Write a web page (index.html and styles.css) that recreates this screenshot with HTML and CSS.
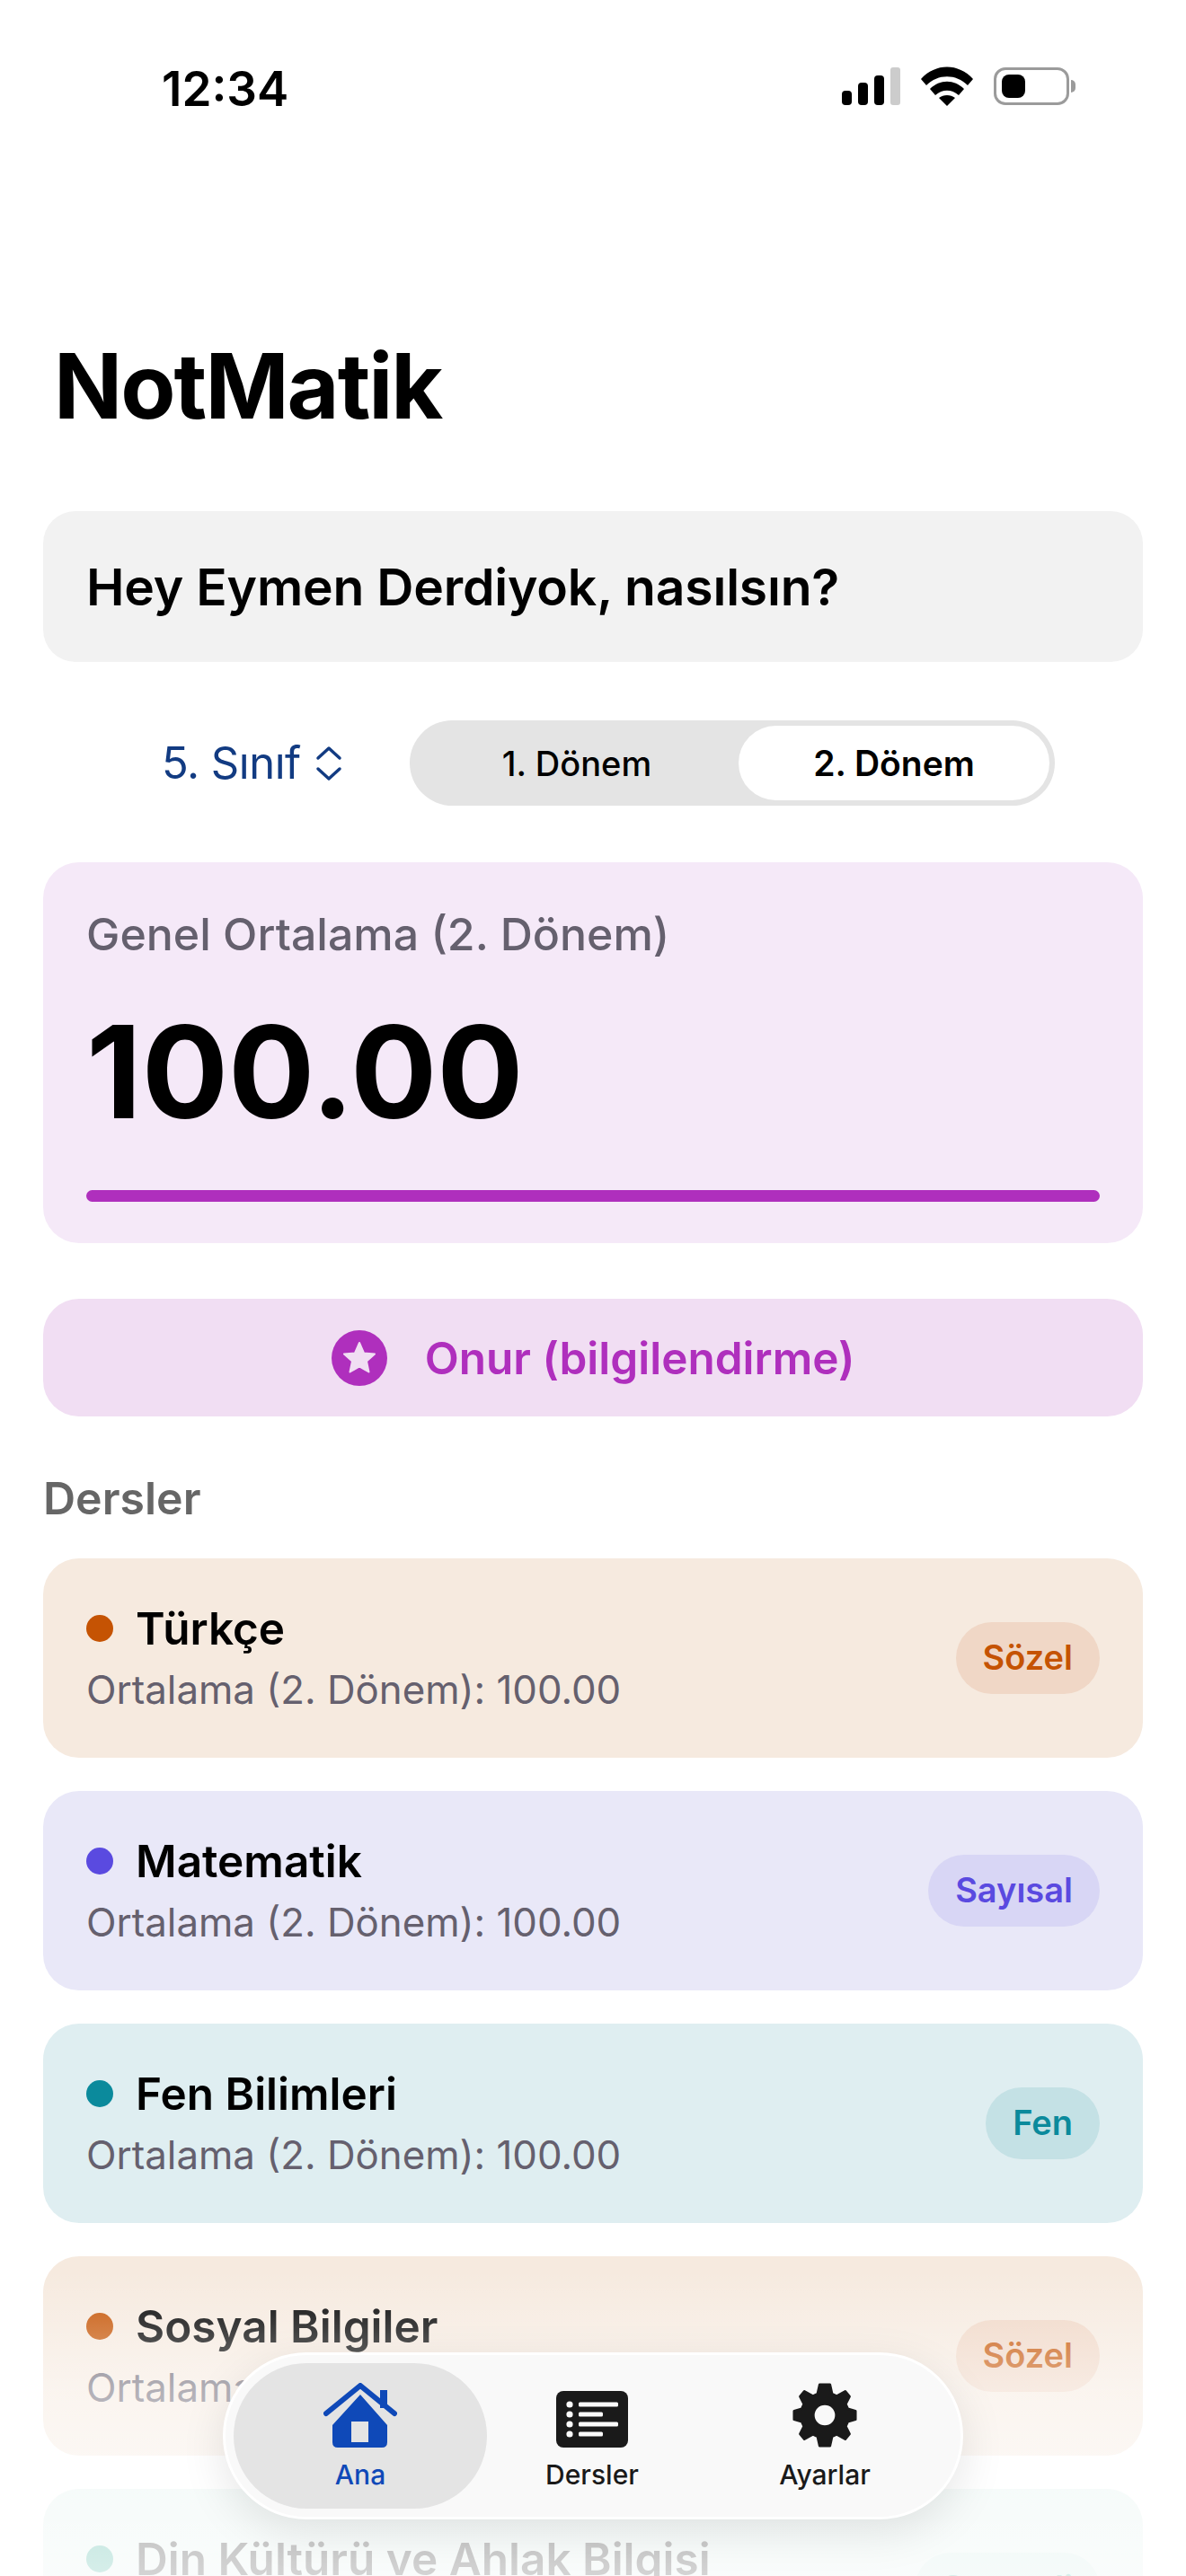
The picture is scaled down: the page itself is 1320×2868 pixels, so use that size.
FILE: index.html
```html
<!DOCTYPE html>
<html lang="tr">
<head>
    <meta charset="UTF-8">
    <meta name="viewport" content="width=device-width, initial-scale=1.0">
    <title>NotMatik</title>
    <link rel="stylesheet" href="styles.css">
</head>
<body>
    <div class="status-bar">
        <span class="clock">12:34</span>
        <div class="status-icons">
            <svg width="66" height="42" viewBox="0 0 66 42">
                <rect x="1" y="26" width="11" height="16" rx="4" fill="#000"/>
                <rect x="19" y="17" width="11" height="25" rx="4" fill="#000"/>
                <rect x="37" y="9" width="11" height="33" rx="4" fill="#000"/>
                <rect x="55" y="0" width="11" height="42" rx="3" fill="#ccc"/>
            </svg>
            <svg width="58" height="44" viewBox="0 0 58 44">
                <path d="M0 14 C16 -4 42 -4 58 14 L52 21 C39 8 19 8 6 21 Z" fill="#000"/>
                <path d="M10 25 C21 14 37 14 48 25 L42 32 C34 25 24 25 16 32 Z" fill="#000"/>
                <path d="M20 35 C25 31 33 31 38 35 L29 44 Z" fill="#000"/>
            </svg>
            <div class="battery">
                <div class="battery-body"><div class="battery-fill"></div></div>
                <div class="battery-nub"></div>
            </div>
        </div>
    </div>

    <h1 class="app-title">NotMatik</h1>

    <div class="greeting">Hey Eymen Derdiyok, nasılsın?</div>

    <div class="term-row">
        <div class="grade">
            <span>5. Sınıf</span>
            <svg width="30" height="40" viewBox="0 0 30 40" fill="none" stroke="#123b82" stroke-width="3.5" stroke-linecap="round" stroke-linejoin="round">
                <path d="M3 14 L15 3 L27 14"/>
                <path d="M3 26 L15 37 L27 26"/>
            </svg>
        </div>
        <div class="segments">
            <div class="segment">1. Dönem</div>
            <div class="segment active">2. Dönem</div>
        </div>
    </div>

    <div class="summary">
        <div class="summary-label">Genel Ortalama (2. Dönem)</div>
        <div class="summary-value">100.00</div>
        <div class="summary-bar"></div>
    </div>

    <div class="honor">
        <svg width="62" height="62" viewBox="0 0 62 62">
            <circle cx="31" cy="31" r="31" fill="#af2fbd"/>
            <path d="M31 14 L36 25.500 L48 26.500 L39 34.500 L41.500 46.500 L31 40.500 L20.500 46.500 L23 34.500 L14 26.500 L26 25.500 Z" fill="#f1def3" stroke="#f1def3" stroke-width="2" stroke-linejoin="round"/>
        </svg>
        <span>Onur (bilgilendirme)</span>
    </div>

    <div class="section-title">Dersler</div>

    <div class="course-list">
        <div class="course orange">
            <div class="course-info">
                <div class="course-name"><i class="dot"></i>Türkçe</div>
                <div class="course-avg">Ortalama (2. Dönem): 100.00</div>
            </div>
            <span class="tag">Sözel</span>
        </div>
        <div class="course indigo">
            <div class="course-info">
                <div class="course-name"><i class="dot"></i>Matematik</div>
                <div class="course-avg">Ortalama (2. Dönem): 100.00</div>
            </div>
            <span class="tag">Sayısal</span>
        </div>
        <div class="course teal">
            <div class="course-info">
                <div class="course-name"><i class="dot"></i>Fen Bilimleri</div>
                <div class="course-avg">Ortalama (2. Dönem): 100.00</div>
            </div>
            <span class="tag">Fen</span>
        </div>
        <div class="course orange">
            <div class="course-info">
                <div class="course-name"><i class="dot"></i>Sosyal Bilgiler</div>
                <div class="course-avg">Ortalama (2. Dönem): 100.00</div>
            </div>
            <span class="tag">Sözel</span>
        </div>
        <div class="course green">
            <div class="course-info">
                <div class="course-name"><i class="dot"></i>Din Kültürü ve Ahlak Bilgisi</div>
                <div class="course-avg">Ortalama (2. Dönem): 100.00</div>
            </div>
            <span class="tag">Seçmeli</span>
        </div>
    </div>

    <div class="fade"></div>

    <nav class="tabbar">
        <div class="tab active">
            <svg width="82" height="72" viewBox="0 0 82 72">
                <path d="M41 13 L71 47 L71 66 Q71 72 65 72 L16 72 Q10 72 10 66 L10 47 Z M31 43 L31 66 L50 66 L50 43 Z" fill="#0f49b8" fill-rule="evenodd"/>
                <path d="M3 34 L41 3 L79 34" fill="none" stroke="#0f49b8" stroke-width="6" stroke-linecap="round" stroke-linejoin="round"/>
                <rect x="63" y="8" width="8" height="20" fill="#0f49b8"/>
            </svg>
            <span>Ana</span>
        </div>
        <div class="tab">
            <svg width="80" height="63" viewBox="0 0 80 63">
                <rect width="80" height="63" rx="8" fill="#1a1a1a"/>
                <g fill="#fafafa">
                    <circle cx="15" cy="15" r="3.6"/>
                    <circle cx="15" cy="26" r="3.6"/>
                    <circle cx="15" cy="37" r="3.6"/>
                    <circle cx="15" cy="48" r="3.6"/>
                    <rect x="25" y="12.500" width="44" height="5" rx="1.500"/>
                    <rect x="25" y="23.500" width="27" height="5" rx="1.500"/>
                    <rect x="25" y="34.500" width="44" height="5" rx="1.500"/>
                    <rect x="25" y="45.500" width="27" height="5" rx="1.500"/>
                </g>
            </svg>
            <span>Dersler</span>
        </div>
        <div class="tab">
            <svg width="72" height="72" viewBox="-2 -2 76 76">
                <path fill="#1a1a1a" stroke="#1a1a1a" stroke-width="3" stroke-linejoin="round" fill-rule="evenodd" d="M30 0 H42 L44.500 11 L50 13.500 L60 8 L65 14 L60.500 23 L63 28.500 L72 31 V41 L63 43.500 L60.500 49 L65 58 L60 64 L50 58.500 L44.500 61 L42 72 H30 L27.500 61 L22 58.500 L12 64 L7 58 L11.500 49 L9 43.500 L0 41 V31 L9 28.500 L11.500 23 L7 14 L12 8 L22 13.500 L27.500 11 Z M36 22.500 A13.500 13.500 0 1 0 36 49.500 A13.500 13.500 0 1 0 36 22.500 Z"/>
            </svg>
            <span>Ayarlar</span>
        </div>
    </nav>
</body>
</html>
```

FILE: styles.css
```css
* {
    box-sizing: border-box;
}
html, body {
    margin: 0;
    height: 2868px;
    overflow: hidden;
}
body {
    position: relative;
    font-family: Inter, "Noto Sans", sans-serif;
    background-color: #fff;
    color: #000;
    padding: 0 48px;
}

.status-bar {
    display: flex;
    justify-content: space-between;
    align-items: center;
    height: 42px;
    margin-top: 75px;
    padding: 0 75px 0 132px;
}
.clock {
    padding-top: 5px;
    font-size: 53px;
    font-weight: 600;
    line-height: 42px;
}
.status-icons {
    display: flex;
    align-items: center;
    gap: 23px;
}
.battery {
    display: flex;
    align-items: center;
    gap: 2px;
}
.battery-body {
    width: 84px;
    height: 42px;
    padding: 5px 6px;
    border: 3px solid #9b9b9b;
    border-radius: 13px;
}
.battery-fill {
    width: 26px;
    height: 100%;
    background-color: #000;
    border-radius: 8px;
}
.battery-nub {
    width: 5px;
    height: 14px;
    background-color: #9b9b9b;
    border-radius: 0 5px 5px 0;
}

.app-title {
    margin: 253px 0 0 12px;
    font-size: 100px;
    font-weight: 700;
    line-height: 120px;
    letter-spacing: -2px;
}

.greeting {
    display: flex;
    align-items: center;
    height: 168px;
    margin-top: 79px;
    padding: 0 48px;
    background-color: #f2f2f2;
    border-radius: 36px;
    font-size: 57px;
    font-weight: 600;
    letter-spacing: -0.2px;
}

.term-row {
    display: flex;
    align-items: center;
    height: 95px;
    margin-top: 65px;
    padding-left: 132px;
}
.grade {
    display: flex;
    align-items: center;
    gap: 16px;
    width: 276px;
    color: #123b82;
    font-size: 49px;
    letter-spacing: -0.5px;
}
.segments {
    display: flex;
    width: 718px;
    height: 95px;
    padding: 6px;
    background-color: #e4e4e4;
    border-radius: 48px;
}
.segment {
    flex: 1;
    display: flex;
    align-items: center;
    justify-content: center;
    border-radius: 42px;
    font-size: 38px;
    font-weight: 500;
}
.segment.active {
    flex: 0 0 346px;
    background-color: #fff;
    font-size: 39px;
    font-weight: 600;
}

.summary {
    height: 424px;
    margin-top: 63px;
    padding: 50px 48px 0;
    background-color: #f5e9f8;
    border-radius: 40px;
}
.summary-label {
    color: #65606e;
    font-size: 50px;
    font-weight: 500;
    line-height: 60px;
}
.summary-value {
    margin-top: 38px;
    font-size: 143px;
    font-weight: 700;
    line-height: 170px;
}
.summary-bar {
    height: 13px;
    margin-top: 47px;
    background-color: #af2fbd;
    border-radius: 7px;
}

.honor {
    display: flex;
    align-items: center;
    justify-content: center;
    gap: 42px;
    height: 131px;
    margin-top: 62px;
    background-color: #f1def3;
    border-radius: 40px;
    color: #af2fbd;
    font-size: 49.5px;
    font-weight: 600;
}

.section-title {
    margin-top: 61px;
    color: #666;
    font-size: 50px;
    font-weight: 600;
    line-height: 60px;
}

.course-list {
    display: flex;
    flex-direction: column;
    gap: 37px;
    margin-top: 37px;
}
.course {
    display: flex;
    justify-content: space-between;
    align-items: center;
    flex-shrink: 0;
    height: 222px;
    padding: 0 48px;
    border-radius: 40px;
}
.course-name {
    display: flex;
    align-items: center;
    gap: 25px;
    font-size: 49.5px;
    font-weight: 600;
    line-height: 60px;
}
.dot {
    width: 30px;
    height: 30px;
    border-radius: 50%;
}
.course-avg {
    margin-top: 12px;
    color: #65606e;
    font-size: 43.8px;
    line-height: 54px;
}
.tag {
    padding: 0 30px;
    height: 80px;
    line-height: 78px;
    border-radius: 40px;
    font-size: 38px;
    font-weight: 600;
}
.orange { background-color: #f6eadf; }
.orange .dot { background-color: #c55303; }
.orange .tag { background-color: #f0d7c6; color: #c55303; }
.indigo { background-color: #e9e8f8; }
.indigo .dot { background-color: #5a4ae0; }
.indigo .tag { background-color: #d8d6f5; color: #5a4ae0; }
.teal { background-color: #dfeef1; }
.teal .dot { background-color: #0b8a9c; }
.teal .tag { background-color: #c4e1e5; color: #0b8a9c; }
.green { background-color: #dff0ec; }
.green .dot { background-color: #119c83; }
.green .tag { background-color: #c6e5df; color: #119c83; }

.fade {
    position: absolute;
    left: 0;
    right: 0;
    bottom: 0;
    height: 340px;
    background: linear-gradient(to bottom, rgba(255, 255, 255, 0), rgba(255, 255, 255, 0.5) 39%, rgba(255, 255, 255, 0.72) 71%, rgba(255, 255, 255, 0.83));
}

.tabbar {
    position: absolute;
    left: 248px;
    top: 2619px;
    display: grid;
    grid-template-columns: 282px 234px 1fr;
    width: 824px;
    height: 186px;
    padding: 9px;
    background-color: #f9f9f9;
    border: 3px solid #fff;
    border-radius: 93px;
    box-shadow: 0 14px 50px rgba(0, 0, 0, 0.1);
}
.tab {
    display: flex;
    flex-direction: column;
    align-items: center;
    justify-content: flex-end;
    gap: 12px;
    padding-bottom: 20px;
    border-radius: 81px;
    color: #1a1a1a;
    font-size: 30px;
    font-weight: 500;
    line-height: 36px;
}
.tab.active {
    background-color: #e4e4e4;
    color: #0f49b8;
}
```
